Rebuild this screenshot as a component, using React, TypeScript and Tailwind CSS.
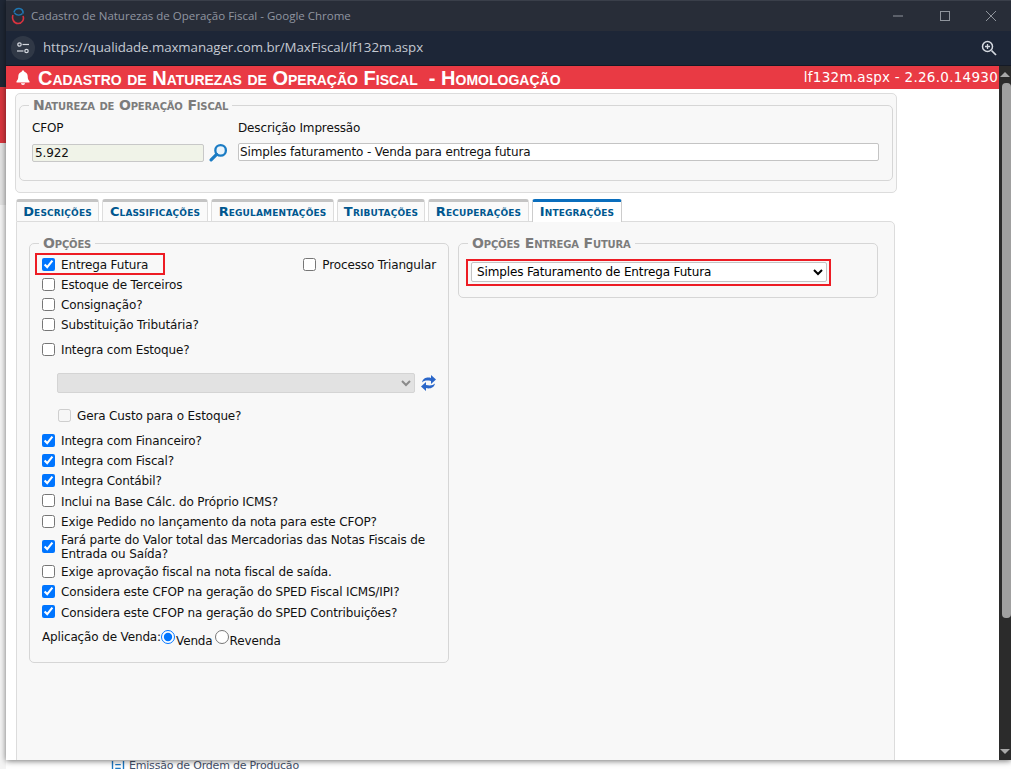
const body = "font-['DejaVu_Sans',sans-serif] text-[12px] tracking-[-0.14px] text-[#111]";

function Check({ label, checked, disabled, h = "h-[20px]" }: { label: string; checked?: boolean; disabled?: boolean; h?: string }) {
  return (
    <label className={`flex items-center gap-[6px] ${h}`}>
      <input type="checkbox" defaultChecked={checked} disabled={disabled} className="m-0 w-[13px] h-[13px] shrink-0" />
      <span className="leading-[14px] pt-[2px]">{label}</span>
    </label>
  );
}

function Legend({ children }: { children: string }) {
  return (
    <legend className="ml-[9px] px-[4px] font-['DejaVu_Sans',sans-serif] font-bold text-[14px] leading-[14px] text-[#7c7c7c] [font-variant:small-caps] tracking-[-0.17px]">
      {children}
    </legend>
  );
}

function Tab({ label, active, w }: { label: string; active?: boolean; w: string }) {
  return (
    <div
      className={`${w} flex items-center justify-center border-x border-t-[3px] rounded-t-[3px] font-['DejaVu_Sans',sans-serif] font-bold text-[13px] tracking-[0.15px] [font-variant:small-caps] text-[#00578f] ${
        active ? "h-[23px] border-x-[#ccc] border-t-[#0a6ebd] bg-white -mb-px relative z-10" : "h-[22px] border-x-[#ddd] border-t-[#c4c4c4] bg-[#fafafa]"
      }`}
    >
      {label}
    </div>
  );
}

export default function App() {
  return (
    <div className="w-[1011px] h-[769px] overflow-hidden flex bg-white">
      {/* page behind, left of the popup */}
      <div className="w-[6px] shrink-0 flex flex-col">
        <div className="h-[87px] bg-[#1f2735]" />
        <div className="h-[56px] bg-[#d9363e]" />
        <div className="h-[62px] bg-[#e4e4e4]" />
        <div className="flex-1 bg-[#f4f4f4]" />
      </div>

      <div className="flex-1 min-w-0 flex flex-col">
        {/* popup window */}
        <div className={`h-[760px] shrink-0 flex flex-col bg-white shadow-[0_1px_6px_rgba(0,0,0,0.55)] relative z-10 ${body}`}>
          <div className="h-[31px] shrink-0 bg-[#282d38] flex items-center pl-[5px] border-t border-[#3a3f4a] tracking-normal">
            <svg width="14" height="18" viewBox="0 0 14 18" fill="none">
              <path d="M3 5.5 C3.5 2.5 6 1.5 8 1.5 C10.5 1.5 12.5 3.5 12 6.5" stroke="#1f78b4" strokeWidth="1.6" />
              <path d="M3.5 6 C6 9 9.5 8.5 11.5 6.5" stroke="#1f78b4" strokeWidth="1.4" />
              <path d="M2 8 C0.5 12 3 16.5 7 16.5 C11 16.5 13.5 12.5 12 9" stroke="#d9333f" strokeWidth="1.6" />
            </svg>
            <span className="ml-[6px] font-['Open_Sans',sans-serif] text-[11.5px] text-[#9095a0]">Cadastro de Naturezas de Operação Fiscal - Google Chrome</span>
            <div className="ml-auto flex items-center text-[#8f949c]">
              <svg width="12" height="12" viewBox="0 0 12 12" className="mr-[35px]"><path d="M1 6h10" stroke="currentColor" /></svg>
              <svg width="12" height="12" viewBox="0 0 12 12" className="mr-[34px]"><rect x="1.5" y="1.5" width="9" height="9" fill="none" stroke="currentColor" /></svg>
              <svg width="12" height="12" viewBox="0 0 12 12" className="mr-[14px]"><path d="M1 1l10 10M11 1L1 11" stroke="currentColor" /></svg>
            </div>
          </div>

          <div className="h-[35px] shrink-0 bg-[#1d2637] flex items-center pl-[5px] pr-[14px] border-b border-[#141a26] tracking-normal">
            <div className="w-[24px] h-[24px] rounded-full bg-[#303846] flex items-center justify-center">
              <svg width="14" height="14" viewBox="0 0 14 14" fill="none" stroke="#d5d9e0" strokeWidth="1.2">
                <circle cx="3.5" cy="3.5" r="1.7" />
                <path d="M6.5 3.5h6.5" />
                <circle cx="10.5" cy="10" r="1.7" />
                <path d="M1 10h6.5" />
              </svg>
            </div>
            <span className="ml-[8px] font-['Open_Sans',sans-serif] text-[13.3px] tracking-[-0.08px] text-[#c4c9d2]">https://qualidade.maxmanager.com.br/MaxFiscal/lf132m.aspx</span>
            <svg width="16" height="16" viewBox="0 0 16 16" fill="none" stroke="#d5d9e0" className="ml-auto">
              <circle cx="6.5" cy="6.5" r="5" strokeWidth="1.5" />
              <path d="M10.5 10.5L15 15" strokeWidth="1.7" />
              <path d="M4 6.5h5M6.5 4v5" strokeWidth="1.3" />
            </svg>
          </div>

          <div className="flex-1 min-h-0 flex">
            <div className="flex-1 min-w-0 flex flex-col overflow-hidden">
              {/* red header */}
              <div className="h-[23px] shrink-0 bg-[#e93a44] flex items-center pl-[10px] pr-[1px] text-white tracking-normal">
                <svg width="14" height="15" viewBox="0 0 14 15" fill="currentColor">
                  <path d="M7 0.5c.8 0 1.3.5 1.3 1.2 2.2.6 3.4 2.3 3.4 4.6 0 2.6.6 3.8 1.8 5V12.5H.5V11.3c1.2-1.2 1.8-2.4 1.8-5 0-2.3 1.2-4 3.4-4.6C5.700 1 6.200.5 7 .5z" />
                  <path d="M5 13.300h4c0 1-.9 1.700-2 1.700s-2-.7-2-1.700z" />
                </svg>
                <span className="ml-[8px] font-['Liberation_Sans',sans-serif] font-bold text-[20px] leading-[22px] [font-variant:small-caps] tracking-[0px] whitespace-pre">Cadastro de Naturezas de Operação Fiscal  - Homologação</span>
                <span className="ml-auto text-[13.5px] tracking-[0.27px] text-white">lf132m.aspx - 2.26.0.14930</span>
              </div>

              <div className="pl-[9px] pt-[4px]">
                {/* top panel */}
                <div className="w-[882px] h-[100px] bg-[#f8f8f8] border border-[#dcdcdc] rounded-[5px] px-[3px]">
                  <fieldset className="h-[83px] mt-[4px] border border-[#d6d6d6] rounded-[5px]">
                    <Legend>Natureza de Operação Fiscal</Legend>
                    <div className="flex mt-[8px] pl-[12px]">
                      <div className="flex flex-col w-[206px]">
                        <span className="leading-[16px]">CFOP</span>
                        <div className="flex items-center mt-[7px]">
                          <input readOnly value="5.922" className="w-[172px] h-[18px] bg-[#f0f3e8] border border-[#c8c8c8] rounded-[2px] px-[2px] outline-none text-[12px]" />
                          <svg width="19" height="19" viewBox="0 0 18 18" fill="none" className="ml-[5px]">
                            <circle cx="11" cy="7" r="5" stroke="#1b7cc4" strokeWidth="2.2" fill="#eaf4fb" />
                            <path d="M7.200 10.800L2 16" stroke="#1b7cc4" strokeWidth="3" strokeLinecap="round" />
                          </svg>
                        </div>
                      </div>
                      <div className="flex flex-col flex-1">
                        <span className="leading-[16px]">Descrição Impressão</span>
                        <input readOnly value="Simples faturamento - Venda para entrega futura" className="w-[641px] h-[18px] mt-[7px] bg-white border border-[#c4c4c4] rounded-[2px] px-[1px] outline-none text-[12px]" />
                      </div>
                    </div>
                  </fieldset>
                </div>

                {/* tabs */}
                <div className="flex gap-[3px] mt-[6px] pl-[1px] items-end">
                  <Tab w="w-[83px]" label="Descrições" />
                  <Tab w="w-[106px]" label="Classificações" />
                  <Tab w="w-[123px]" label="Regulamentações" />
                  <Tab w="w-[88px]" label="Tributações" />
                  <Tab w="w-[101px]" label="Recuperações" />
                  <Tab w="w-[90px]" active label="Integrações" />
                </div>

                <div className="ml-[1px] w-[879px] h-[560px] bg-[#f8f8f8] border border-[#dcdcdc] rounded-tr-[5px] flex gap-[9px] pl-[12px] pt-[14px] items-start">
                  <fieldset className="w-[420px] h-[427px] border border-[#d6d6d6] rounded-[5px]">
                    <Legend>Opções</Legend>
                    <div className="px-[12px]">
                      <div className="flex justify-between h-[20px] mt-[4px]">
                        <div className="relative">
                          <Check checked label="Entrega Futura" />
                          <div className="absolute left-[-7px] top-[-1px] w-[130px] h-[22px] border-2 border-[#ed1c24]" />
                        </div>
                        <Check label="Processo Triangular" />
                      </div>
                      <Check label="Estoque de Terceiros" />
                      <Check label="Consignação?" />
                      <Check label="Substituição Tributária?" />
                      <div className="mt-[5px]"><Check label="Integra com Estoque?" /></div>
                      <div className="flex items-center mt-[14px] ml-[15px]">
                        <select disabled className="w-[358px] h-[20px] bg-[#e2e2e2] border border-[#d4d4d4] rounded-[2px] text-[#8a8a8a]" />
                        <svg width="15" height="18" viewBox="0 0 15 18" fill="#2a66c9" className="ml-[6px]">
                          <path d="M1 8.500C2 3.500 7 3 10 4L10 1L15 5.500L10 10L10 7C6 6 3 6.500 1 8.500Z" />
                          <path d="M14 9.500C13 14.500 8 15 5 14L5 17L0 12.500L5 8L5 11C9 12 12 11.500 14 9.500Z" />
                        </svg>
                      </div>
                      <div className="mt-[12px] ml-[16px]"><Check disabled label="Gera Custo para o Estoque?" /></div>
                      <div className="mt-[5px]">
                        <Check checked label="Integra com Financeiro?" />
                        <Check checked label="Integra com Fiscal?" />
                        <Check checked label="Integra Contábil?" />
                        <Check label="Inclui na Base Cálc. do Próprio ICMS?" h="h-[21px]" />
                        <Check label="Exige Pedido no lançamento da nota para este CFOP?" />
                        <Check checked label="Fará parte do Valor total das Mercadorias das Notas Fiscais de Entrada ou Saída?" h="h-[30px]" />
                        <Check label="Exige aprovação fiscal na nota fiscal de saída." />
                        <Check checked label="Considera este CFOP na geração do SPED Fiscal ICMS/IPI?" />
                        <Check checked label="Considera este CFOP na geração do SPED Contribuições?" h="h-[21px]" />
                      </div>
                      <div className="flex items-start mt-[5px] h-[24px] leading-[20px]">
                        <span>Aplicação de Venda:</span>
                        <input type="radio" name="v" defaultChecked className="m-0 mt-[3px] w-[14px] h-[14px]" />
                        <span className="mt-[4px] ml-[1px]">Venda</span>
                        <input type="radio" name="v" className="m-0 mt-[3px] ml-[2px] w-[14px] h-[14px]" />
                        <span className="mt-[4px] ml-[1px]">Revenda</span>
                      </div>
                    </div>
                  </fieldset>

                  <fieldset className="w-[420px] h-[62px] border border-[#d6d6d6] rounded-[5px]">
                    <Legend>Opções Entrega Futura</Legend>
                    <div className="relative mt-[12px] ml-[12px] w-[356px] h-[20px]">
                      <select className="w-[356px] h-[20px] bg-white border border-[#c4c4c4] rounded-[2px] text-[12px] pl-[1px] text-black">
                        <option>Simples Faturamento de Entrega Futura</option>
                      </select>
                      <div className="absolute left-[-5px] top-[-3px] w-[365px] h-[27px] border-2 border-[#ed1c24]" />
                    </div>
                  </fieldset>
                </div>
              </div>
            </div>

            {/* scrollbar */}
            <div className="w-[12px] shrink-0 bg-[#2b2b2b] flex flex-col items-end">
              <div className="mt-[6px] mr-[1px] w-0 h-0 border-x-[5px] border-x-transparent border-b-[5px] border-b-[#a8a8a8]" />
              <div className="mt-[6px] w-[9px] h-[535px] bg-[#a0a0a0] rounded-[4px]" />
              <div className="mt-auto mr-[1px] mb-[6px] w-0 h-0 border-x-[5px] border-x-transparent border-t-[5px] border-t-[#a8a8a8]" />
            </div>
          </div>
        </div>

        {/* page behind, below the popup */}
        <div className="flex-1 bg-white pl-[105px] flex items-start gap-[4px] overflow-hidden">
          <svg width="14" height="11" viewBox="0 0 14 12" fill="none" stroke="#1b78c4" strokeWidth="1.5" className="mt-[1px]">
            <path d="M1 0v12M13 0v12M4 4h6M4 8h6" />
          </svg>
          <span className="font-['DejaVu_Sans',sans-serif] text-[11px] tracking-[-0.2px] text-[#44506a] leading-[12px]">Emissão de Ordem de Produção</span>
        </div>
      </div>
    </div>
  );
}
